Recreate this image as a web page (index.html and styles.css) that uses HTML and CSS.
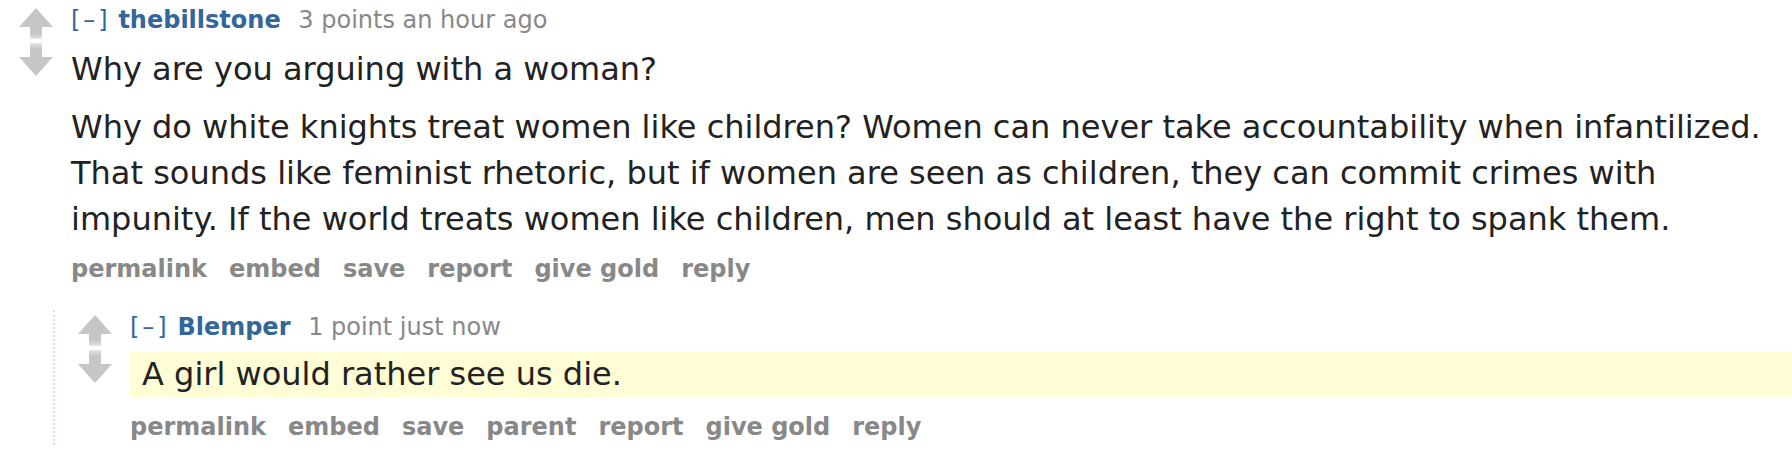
FILE: index.html
```html
<!DOCTYPE html>
<html>
<head>
<meta charset="utf-8">
<link rel="stylesheet" href="styles.css">
</head>
<body>
<div class="comment">
  <div class="midcol">
    <svg class="arrow up" viewBox="0 0 34 32" width="34" height="32">
      <defs>
        <linearGradient id="gu" x1="0" y1="0" x2="0" y2="1">
          <stop offset="0" stop-color="#c6c6c6"/>
          <stop offset="0.6" stop-color="#c6c6c6"/>
          <stop offset="1" stop-color="#e6e6e6"/>
        </linearGradient>
      </defs>
      <polygon points="17,0 34,19 0,19" fill="#c6c6c6"/>
      <rect x="11" y="18" width="12" height="13" fill="url(#gu)"/>
    </svg>
    <svg class="arrow down" viewBox="0 0 34 34" width="34" height="34">
      <defs>
        <linearGradient id="gd" x1="0" y1="0" x2="0" y2="1">
          <stop offset="0" stop-color="#e6e6e6"/>
          <stop offset="0.4" stop-color="#c6c6c6"/>
          <stop offset="1" stop-color="#c6c6c6"/>
        </linearGradient>
      </defs>
      <rect x="11" y="0" width="12" height="15" fill="url(#gd)"/>
      <polygon points="0,14 34,14 17,33" fill="#c6c6c6"/>
    </svg>
  </div>
  <div class="entry">
    <p class="tagline"><span class="expand">[–]</span> <span class="author">thebillstone</span> <span class="score">3 points</span> an hour ago</p>
    <div class="md">
      <p>Why are you arguing with a woman?</p>
      <p>Why do white knights treat women like children? Women can never take accountability when infantilized. That sounds like feminist rhetoric, but if women are seen as children, they can commit crimes with impunity. If the world treats women like children, men should at least have the right to spank them.</p>
    </div>
    <ul class="buttons">
      <li>permalink</li><li>embed</li><li>save</li><li>report</li><li>give gold</li><li>reply</li>
    </ul>
    <div class="child">
      <div class="comment nested">
        <div class="midcol">
          <svg class="arrow up" viewBox="0 0 34 32" width="34" height="32">
            <polygon points="17,0 34,19 0,19" fill="#c6c6c6"/>
            <rect x="11" y="18" width="12" height="13" fill="url(#gu)"/>
          </svg>
          <svg class="arrow down" viewBox="0 0 34 34" width="34" height="34">
            <rect x="11" y="0" width="12" height="15" fill="url(#gd)"/>
            <polygon points="0,14 34,14 17,33" fill="#c6c6c6"/>
          </svg>
        </div>
        <div class="entry">
          <p class="tagline"><span class="expand">[–]</span> <span class="author">Blemper</span> <span class="score">1 point</span> just now</p>
          <div class="md highlight">
            <p>A girl would rather see us die.</p>
          </div>
          <ul class="buttons">
            <li>permalink</li><li>embed</li><li>save</li><li>parent</li><li>report</li><li>give gold</li><li>reply</li>
          </ul>
        </div>
      </div>
    </div>
  </div>
</div>
</body>
</html>
```
FILE: styles.css
```css
html, body {
  margin: 0;
  padding: 0;
  background: #fff;
}
body {
  font-family: "DejaVu Sans", Verdana, sans-serif;
  color: #222;
  overflow: hidden;
}
.comment {
  display: flex;
  align-items: flex-start;
}
.midcol {
  display: flex;
  flex-direction: column;
  align-items: center;
  width: 34px;
  margin-left: 19px;
  margin-right: 18px;
  padding-top: 8px;
}
.arrow {
  display: block;
}
.arrow.down {
  margin-top: 3px;
}
.entry {
  flex: 1;
  min-width: 0;
}
.tagline {
  margin: 0;
  padding-top: 4px;
  font-size: 24px;
  line-height: 32px;
  color: #888;
  white-space: nowrap;
}
.expand {
  color: #369;
  letter-spacing: 3px;
}
.author {
  color: #369;
  font-weight: bold;
  margin-right: 10px;
}
.md {
  font-size: 32px;
  line-height: 46px;
  margin-top: 10px;
}
.md p {
  margin: 0 0 12px 0;
}
.md p:last-child {
  margin-bottom: 0;
}
.buttons {
  list-style: none;
  margin: 11px 0 0 0;
  padding: 0;
  display: flex;
  gap: 22px;
  font-size: 24px;
  line-height: 32px;
  font-weight: bold;
  color: #888;
}
.child {
  margin-top: 25px;
  margin-left: -18px;
  border-left: 2px dotted #dcdcf4;
  padding-bottom: 2px;
}
.nested .midcol {
  margin-left: 23px;
  margin-right: 18px;
  padding-top: 5px;
}
.nested .tagline {
  padding-top: 1px;
}
.highlight {
  background: #fffdd6;
  margin-top: 8px;
  padding-left: 12px;
}
.nested .buttons {
  margin-top: 14px;
}
```
